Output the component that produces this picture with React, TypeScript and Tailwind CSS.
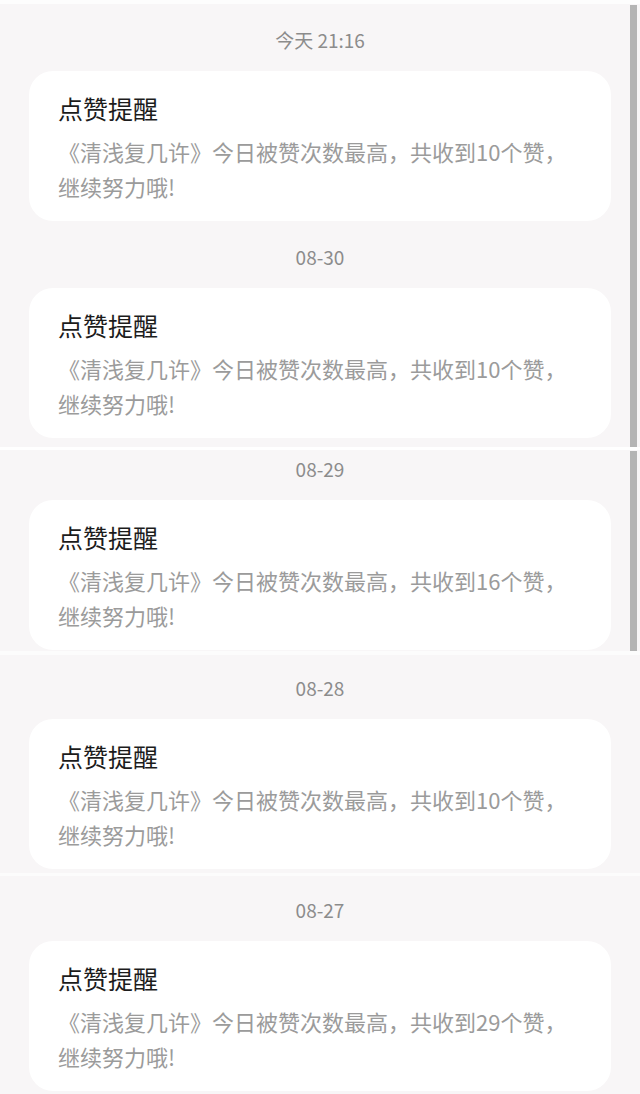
import React from "react";

type Notice = { date: string; count: number };

function NoticeCard({ count }: { count: number }) {
    return (
        <div className="h-[150px] rounded-[24px] bg-white px-[29px] pt-[20px]">
            <h2 className="text-[25px] leading-[34px] text-[#1c1c1c]">点赞提醒</h2>
            <p className="mt-[9px] text-[22px] leading-[35px] text-[#9b9b9b]">
                《清浅复几许》今日被赞次数最高，共收到{count}个赞，
                <br />
                继续努力哦!
            </p>
        </div>
    );
}

function DateLabel({ text }: { text: string }) {
    return (
        <div className="h-6 text-center text-[19px] leading-6 text-[#8c8c8c]">{text}</div>
    );
}

function Item({ notice }: { notice: Notice }) {
    return (
        <div>
            <DateLabel text={notice.date} />
            <div className="mt-[19px]">
                <NoticeCard count={notice.count} />
            </div>
        </div>
    );
}

// stitched screenshot segments, each with its own scroll offset
function Segment({
    children,
    className,
    scrollbar,
}: {
    children: React.ReactNode;
    className: string;
    scrollbar?: boolean;
}) {
    return (
        <div className={`relative overflow-hidden bg-[#f8f6f7] px-[29px] ${className}`}>
            {children}
            {scrollbar && (
                <div className="absolute right-[3px] top-[1px] bottom-0 w-[7px] bg-[#b4b4b4]" />
            )}
        </div>
    );
}

export default function App() {
    return (
        <div className="flex h-[1094px] w-[640px] flex-col overflow-hidden bg-[#fdfdfd] font-['Noto_Sans_CJK_SC','Noto_Sans',sans-serif]">
            <div className="h-[4px] shrink-0 bg-[#fdfdfd]" />

            <Segment className="h-[443px] shrink-0 pt-[24px]" scrollbar>
                <Item notice={{ date: "今天 21:16", count: 10 }} />
                <div className="mt-[24px]">
                    <Item notice={{ date: "08-30", count: 10 }} />
                </div>
            </Segment>

            <div className="h-[3px] shrink-0 bg-white" />

            <Segment className="h-[201px] shrink-0 pt-[7px]" scrollbar>
                <Item notice={{ date: "08-29", count: 16 }} />
            </Segment>

            <div className="h-[4px] shrink-0 bg-[#fcfcfc]" />

            <Segment className="h-[218px] shrink-0 pt-[21px]">
                <Item notice={{ date: "08-28", count: 10 }} />
            </Segment>

            <div className="h-[3px] shrink-0 bg-[#fcfcfc]" />

            <Segment className="flex-1 pt-[22px]">
                <Item notice={{ date: "08-27", count: 29 }} />
            </Segment>
        </div>
    );
}
